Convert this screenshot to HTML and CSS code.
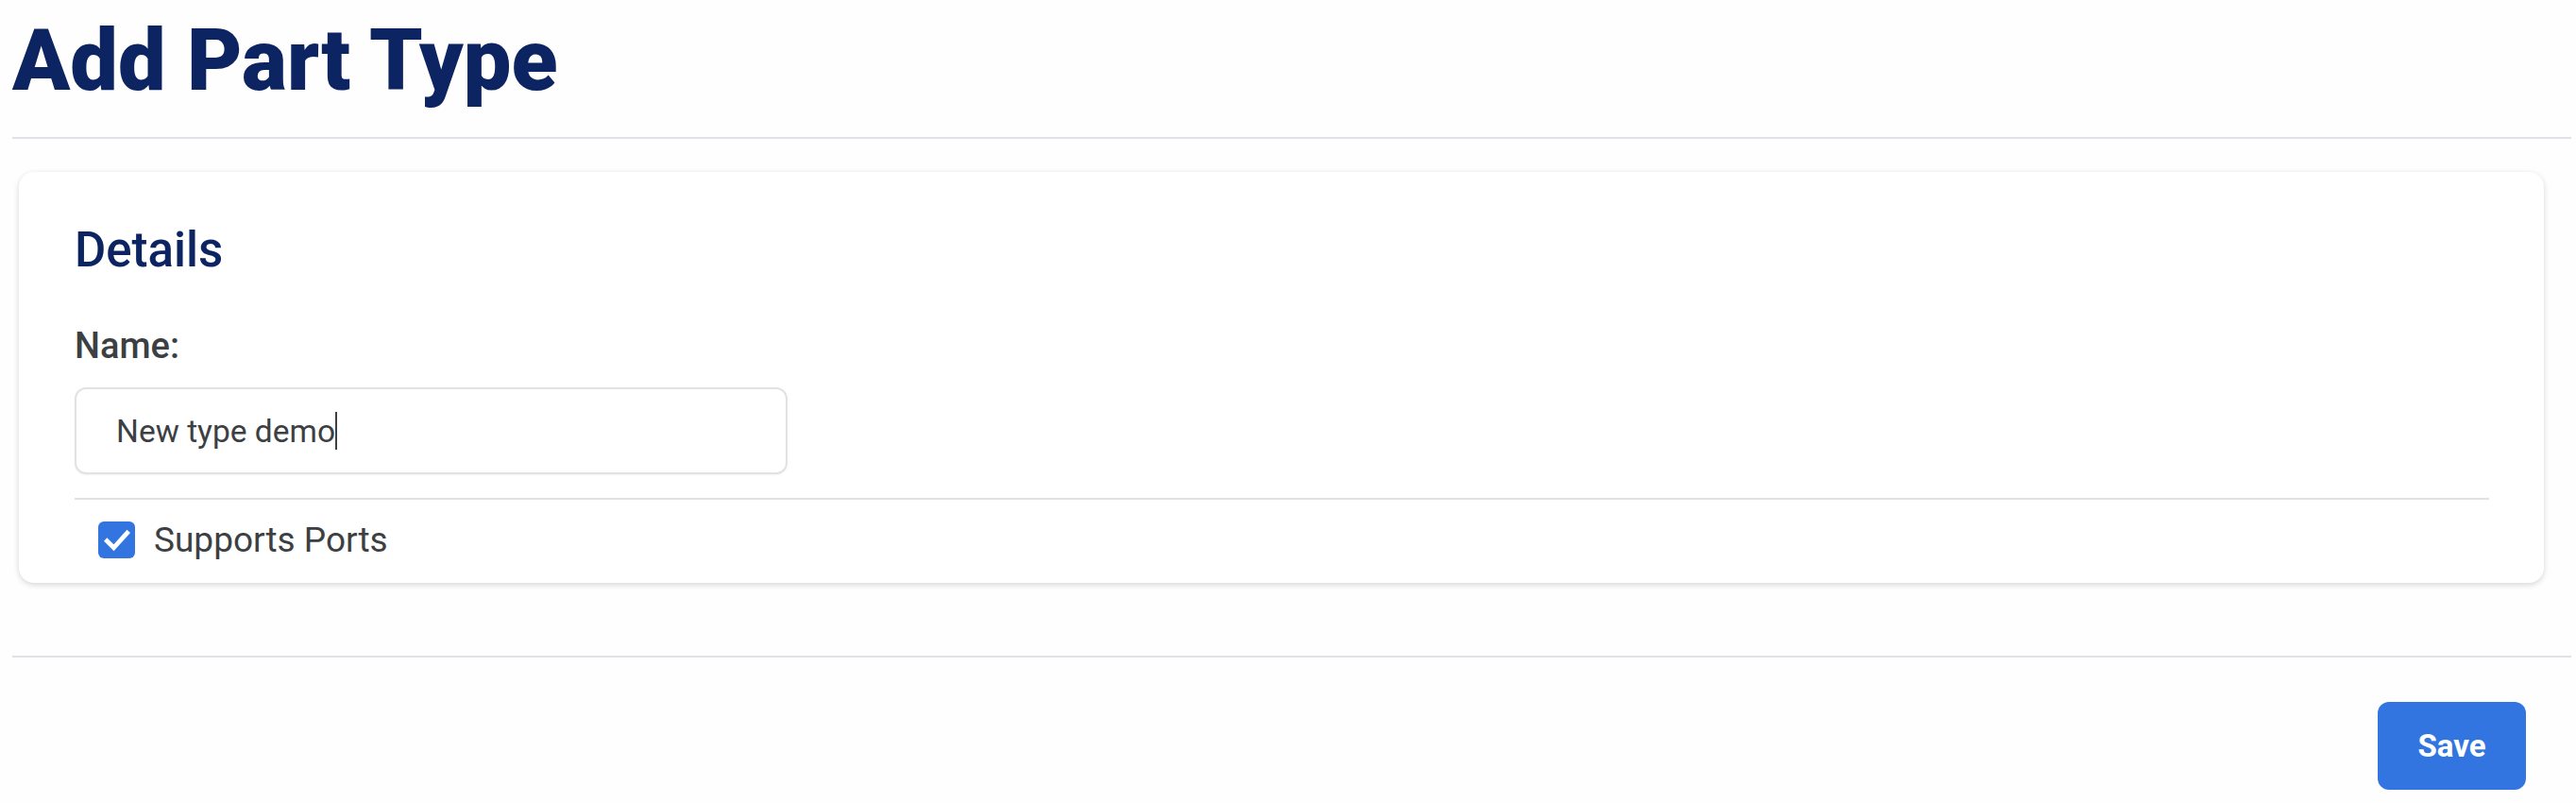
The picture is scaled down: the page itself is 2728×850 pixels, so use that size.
FILE: index.html
```html
<!DOCTYPE html>
<html lang="en">
<head>
<meta charset="utf-8">
<title>Add Part Type</title>
<link rel="stylesheet" href="styles.css">
</head>
<body>
<div class="page">
  <h1 class="title">Add Part Type</h1>
  <div class="rule"></div>
  <section class="card">
    <h2 class="card-title">Details</h2>
    <label class="field-label">Name:</label>
    <div class="text-input"><span class="value">New type demo</span><span class="caret"></span></div>
    <div class="rule inner"></div>
    <div class="check-row">
      <span class="checkbox">
        <svg viewBox="0 0 24 24" width="34" height="34"><path d="M4.5 12.5l5 5L19.5 6.5" fill="none" stroke="#fff" stroke-width="3.4" stroke-linecap="square" stroke-linejoin="miter"/></svg>
      </span>
      <span class="check-label">Supports Ports</span>
    </div>
  </section>
  <div class="rule bottom"></div>
  <div class="actions">
    <button class="btn-save">Save</button>
  </div>
</div>
</body>
</html>
```
FILE: styles.css
```css
html, body {
  margin: 0;
  padding: 0;
  background: #fefefe;
}
.page {
  padding: 0 5px 0 13px;
  font-family: Roboto, "Liberation Sans", sans-serif;
  color: #3c4043;
}
.title {
  margin: 0;
  padding-top: 11px;
  font-family: Roboto, "Liberation Sans", sans-serif;
  font-weight: 900;
  font-size: 90px;
  line-height: 108px;
  color: #0c2461;
}
.rule {
  height: 2px;
  background: #dfe3e8;
}
.title + .rule {
  margin-top: 26px;
}
.card {
  margin: 35px 29px 0 7px;
  background: #fff;
  border-radius: 16px;
  box-shadow: 0 2px 6px rgba(0, 0, 0, 0.16);
  padding: 53px 58px 26px 59px;
}
.card-title {
  margin: 0;
  font-family: Roboto, "Liberation Sans", sans-serif;
  font-weight: 500;
  font-size: 51px;
  line-height: 59px;
  color: #0c2461;
}
.field-label {
  display: block;
  margin-top: 51px;
  font-size: 38px;
  line-height: 42px;
  font-weight: 500;
  color: #3c4043;
}
.text-input {
  margin-top: 23px;
  width: 755px;
  height: 92px;
  box-sizing: border-box;
  border: 2px solid #e2e2e2;
  border-radius: 12px;
  box-shadow: 0 1px 2px rgba(0, 0, 0, 0.05);
  display: flex;
  align-items: center;
  padding-left: 42px;
  font-size: 33.5px;
  color: #3c4043;
}
.caret {
  display: inline-block;
  width: 2px;
  height: 40px;
  background: #3c4043;
}
.rule.inner {
  margin-top: 25px;
}
.check-row {
  display: flex;
  align-items: center;
  gap: 20px;
  margin-top: 23px;
  padding-left: 25px;
}
.checkbox {
  width: 39px;
  height: 39px;
  border-radius: 6px;
  background: #3275e0;
  display: flex;
  align-items: center;
  justify-content: center;
}
.check-label {
  font-size: 37px;
  line-height: 39px;
  color: #3c4043;
}
.rule.bottom {
  margin-top: 77px;
}
.actions {
  display: flex;
  justify-content: flex-end;
  padding: 47px 48px 0 0;
}
.btn-save {
  width: 157px;
  height: 93px;
  border: none;
  border-radius: 12px;
  background: #3275e0;
  color: #fff;
  font-family: Roboto, "Liberation Sans", sans-serif;
  font-weight: 700;
  font-size: 33px;
  padding: 0;
}
```
